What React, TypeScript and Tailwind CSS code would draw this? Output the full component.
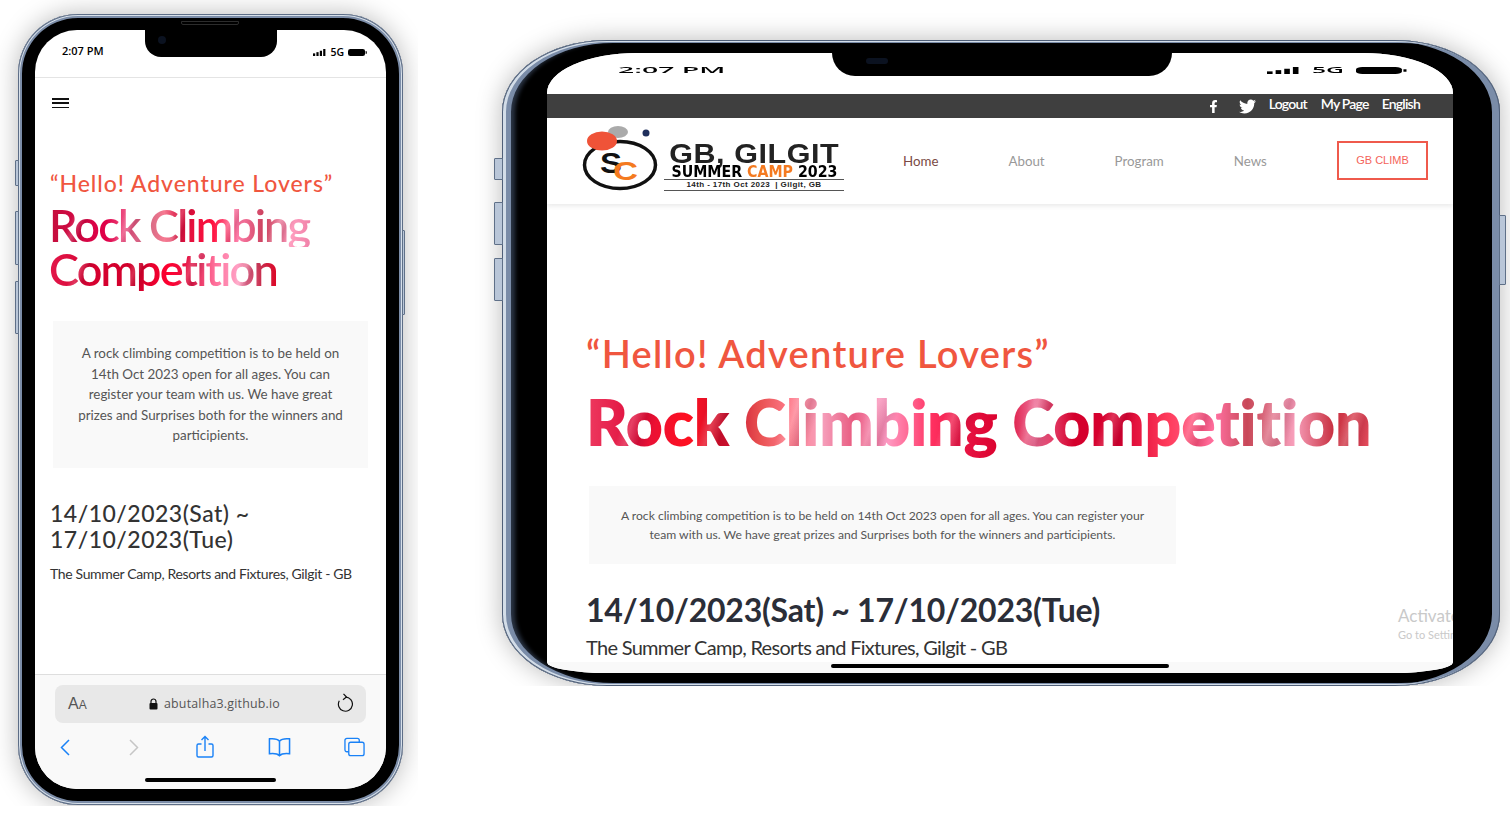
import { FaFacebookF, FaTwitter } from "react-icons/fa";

function Signal({ className }: { className: string }) {
  return (
    <svg viewBox="0 0 13 8" className={className} preserveAspectRatio="none">
      <rect x="0" y="5" width="2.2" height="3" fill="#000" />
      <rect x="3.4" y="3.6" width="2.2" height="4.4" fill="#000" />
      <rect x="6.8" y="2" width="2.2" height="6" fill="#000" />
      <rect x="10.2" y="0" width="2.2" height="8" fill="#000" />
    </svg>
  );
}

function Battery({ className }: { className: string }) {
  return (
    <svg viewBox="0 0 20 8" className={className} preserveAspectRatio="none">
      <rect x="0" y="0" width="18" height="8" rx="2.5" fill="#000" />
      <rect x="18.6" y="2.6" width="1.2" height="2.8" fill="#000" />
    </svg>
  );
}

function SideButton({ className }: { className: string }) {
  return <div className={`absolute rounded-[1px] border border-[#5f7088] bg-[#b9c6d8] ${className}`} />;
}

function Logo() {
  return (
    <div className="flex h-[68px] w-[262px] items-start">
      <svg viewBox="0 0 78 66" className="mt-[-2px] h-[66px] w-[78px] shrink-0">
        <ellipse cx="38" cy="40" rx="35.500" ry="23.500" fill="none" stroke="#111" strokeWidth="3.500" />
        <ellipse cx="36" cy="7" rx="10" ry="6" fill="#aaaaaa" />
        <circle cx="64" cy="8" r="3.500" fill="#1f2f5c" />
        <ellipse cx="20" cy="16" rx="15" ry="9.500" fill="#ef5338" />
        <text x="18" y="48" fontSize="29" fontWeight="700" fill="#111" fontFamily="Liberation Sans, sans-serif" textLength="22" lengthAdjust="spacingAndGlyphs">S</text>
        <text x="31" y="55" fontSize="25" fontWeight="700" fill="#f47a20" fontFamily="Liberation Sans, sans-serif" textLength="25" lengthAdjust="spacingAndGlyphs">C</text>
      </svg>
      <div className="mt-[16px] ml-[4px] flex w-[180px] flex-col items-center text-black">
        <div className="h-[22px] scale-x-[1.130] text-[27px] leading-[22px] font-bold tracking-[0.5px] text-[#222] [font-family:'Liberation_Sans',sans-serif]">
          GB, GILGIT
        </div>
        <div className="h-[14px] scale-x-[0.86] text-[16.500px] leading-[14px] font-bold whitespace-nowrap [font-family:'DejaVu_Sans',sans-serif]">
          SUMMER <span className="text-[#f47a20]">CAMP</span> 2023
        </div>
        <div className="h-[12px] w-[180px] border-y border-[#555] text-center text-[8px] leading-[10px] font-bold tracking-[0.4px] whitespace-nowrap text-[#222] [font-family:'Liberation_Sans',sans-serif]">
          14th - 17th Oct 2023 &nbsp;| Gilgit, GB
        </div>
      </div>
    </div>
  );
}

function MobilePhone() {
  return (
    <div className="absolute top-0 left-0 h-[806px] w-[418px] overflow-hidden pt-[14px] pl-[18px]">
      <div className="relative h-[791px] w-[385px] rounded-[60px] bg-black pt-[16px] pl-[17px] shadow-[inset_0_0_0_1px_#5d6d86,inset_0_0_0_2px_#d7e0ea,inset_0_0_0_4px_#7c8da8,0_0_26px_rgba(0,0,0,0.28)]">
        <SideButton className="top-[146px] left-[-3px] h-[26px] w-[4px]" />
        <SideButton className="top-[197px] left-[-3px] h-[54px] w-[4px]" />
        <SideButton className="top-[267px] left-[-3px] h-[53px] w-[4px]" />
        <SideButton className="top-[216px] right-[-2px] h-[85px] w-[3px]" />
        <div className="absolute top-[7px] left-[163px] h-[4px] w-[58px] rounded-b-[2px] border border-[#2c2c2c]" />
        <div className="relative flex h-[759px] w-[351px] flex-col overflow-hidden rounded-[42px] bg-white [font-family:Lato,sans-serif]">
          <div className="absolute top-0 left-[110px] flex h-[27px] w-[132px] items-start rounded-b-[16px] bg-black pt-[6px] pl-[13px]">
            <div className="h-[8px] w-[8px] rounded-full bg-[#0b1220]" />
          </div>
          <div className="flex h-[48px] shrink-0 items-start justify-between border-b border-[#e4e4e4] pt-[14px] pr-[19px] pl-[27px]">
            <span className="text-[11px] leading-[14px] font-semibold text-black [font-family:'Open_Sans',sans-serif]">2:07 PM</span>
            <div className="flex items-center gap-[4px] pt-[1px]">
              <Signal className="h-[7px] w-[13px]" />
              <span className="text-[10.500px] leading-[14px] font-semibold text-black [font-family:'Open_Sans',sans-serif]">5G</span>
              <Battery className="h-[7px] w-[19px]" />
            </div>
          </div>

          <div className="flex min-h-0 flex-1 flex-col pr-[18px] pl-[15px]">
            <div className="mt-[20px] ml-[2px] flex h-[10px] w-[17px] flex-col justify-between">
              <div className="h-[1.500px] bg-[#111]" />
              <div className="h-[1.500px] bg-[#111]" />
              <div className="h-[1.500px] bg-[#111]" />
            </div>
            <div className="mt-[61px] text-[23px] leading-[28px] font-medium tracking-[0.94px] whitespace-nowrap text-[#f0563f]">
              “Hello! Adventure Lovers”
            </div>
            <h1 className="mt-[6px] ml-[-1px] text-[45px] leading-[44px] font-semibold tracking-[-1.800px]">
              <span className="block w-fit bg-[repeating-linear-gradient(112deg,rgba(255,255,255,0)_0px,rgba(255,255,255,0)_26px,rgba(255,255,255,0.2)_33px,rgba(110,0,30,0.18)_40px,rgba(255,255,255,0)_47px),linear-gradient(90deg,#c40f3d_0%,#e00049_22%,#ef5d8c_30%,#c9637e_36%,#f67a92_44%,#d8113f_50%,#ff0f3c_62%,#ff7eaa_72%,#cb3f5c_82%,#ff9fc0_92%,#f080a8_100%)] bg-clip-text pr-[2px] text-transparent">
                Rock Climbing
              </span>
              <span className="block w-fit bg-[repeating-linear-gradient(112deg,rgba(255,255,255,0)_0px,rgba(255,255,255,0)_30px,rgba(255,255,255,0.18)_37px,rgba(110,0,30,0.2)_44px,rgba(255,255,255,0)_51px),linear-gradient(90deg,#e2184b_0%,#d6002f_20%,#d1002b_38%,#ff0030_52%,#e01a4a_62%,#ff6f9a_72%,#ffa0c4_82%,#c83050_92%,#e00020_100%)] bg-clip-text pr-[2px] text-transparent">
                Competition
              </span>
            </h1>
            <div className="mt-[30px] ml-[3px] flex h-[147px] w-[315px] shrink-0 items-center justify-center bg-[#f9f9f9] px-[20px] text-center text-[13.400px] leading-[20.600px] text-[#555]">
              <p>A rock climbing competition is to be held on 14th Oct 2023 open for all ages. You can register your team with us. We have great prizes and Surprises both for the winners and participients.</p>
            </div>
            <div className="mt-[32px] text-[23px] leading-[26px] font-medium tracking-[0.5px] text-[#333]">
              14/10/2023(Sat) ~<br />17/10/2023(Tue)
            </div>
            <p className="mt-[13px] text-[14px] leading-[18px] tracking-[-0.350px] whitespace-nowrap text-[#333]">
              The Summer Camp, Resorts and Fixtures, Gilgit - GB
            </p>
          </div>

          <div className="flex h-[115px] shrink-0 flex-col items-center border-t border-[#dedede] bg-[#f9f9f9]">
            <div className="mt-[10px] flex h-[38px] w-[311px] items-center rounded-[8px] bg-[#e8e8e8] pr-[13px] pl-[13px]">
              <span className="w-[81px] text-[#555] [font-family:'Liberation_Sans',sans-serif]">
                <span className="text-[16px]">A</span><span className="text-[12px]">A</span>
              </span>
              <svg viewBox="0 0 9 12" className="h-[12px] w-[9px] shrink-0">
                <path d="M2 5.500V3.500a2.500 2.500 0 0 1 5 0v2" fill="none" stroke="#111" strokeWidth="1.200" />
                <rect x="0.500" y="5" width="8" height="6.500" rx="1" fill="#111" />
              </svg>
              <span className="ml-[6px] flex-1 text-[12.400px] tracking-[0.2px] text-[#555] [font-family:'Open_Sans',sans-serif]">abutalha3.github.io</span>
              <svg viewBox="0 0 16 19" className="mb-[3px] h-[19px] w-[16px] shrink-0" fill="none" stroke="#111" strokeWidth="1.200">
                <path d="M8.500 4.200A7 7 0 1 1 2.300 7.800" />
                <path d="M6.500 0.800 9.500 4 6 6.800" />
              </svg>
            </div>
            <div className="mt-[12px] flex h-[24px] w-full items-center pl-[25px]">
              <svg viewBox="0 0 10 17" className="h-[17px] w-[10px] shrink-0" fill="none" stroke="#1a82f7" strokeWidth="1.500">
                <path d="M9 1 1.500 8.500 9 16" />
              </svg>
              <svg viewBox="0 0 10 17" className="ml-[59px] h-[17px] w-[10px] shrink-0" fill="none" stroke="#c6c6c6" strokeWidth="1.500">
                <path d="M1 1 8.500 8.500 1 16" />
              </svg>
              <svg viewBox="0 0 18 24" className="ml-[57px] h-[24px] w-[18px] shrink-0" fill="none" stroke="#1a82f7" strokeWidth="1.400">
                <path d="M5.500 9H2.500a1.500 1.500 0 0 0-1.500 1.500v10a1.500 1.500 0 0 0 1.500 1.500h13a1.500 1.500 0 0 0 1.500-1.500v-10A1.500 1.500 0 0 0 15.500 9h-3" />
                <path d="M9 16V1.500M5.500 5 9 1.500 12.500 5" />
              </svg>
              <svg viewBox="0 0 24 20" className="ml-[54px] h-[20px] w-[23px] shrink-0" fill="none" stroke="#1a82f7" strokeWidth="1.600">
                <path d="M12 4C10 1.500 6 1 1.500 1.500V17C6 16.500 10 17 12 19c2-2 6-2.500 10.500-2V1.500C18 1 14 1.500 12 4Zm0 0v15" />
              </svg>
              <svg viewBox="0 0 22 20" className="ml-[53px] h-[20px] w-[21px] shrink-0" fill="none" stroke="#1a82f7" strokeWidth="1.400">
                <rect x="5" y="5" width="16" height="14" rx="2" />
                <path d="M5 15H3a2 2 0 0 1-2-2V3a2 2 0 0 1 2-2h11a2 2 0 0 1 2 2v2" />
              </svg>
            </div>
            <div className="mt-[19px] h-[4px] w-[131px] rounded-full bg-black" />
          </div>
        </div>
      </div>
    </div>
  );
}

function DesktopPhone() {
  return (
    <div className="absolute top-0 left-[420px] h-[686px] w-[1090px] overflow-hidden pt-[40px] pl-[82px]">
      <div className="relative h-[646px] w-[998px] rounded-[105px/72px] bg-black pt-[13px] pl-[45px] shadow-[inset_0_0_0_1px_#4f5f78,inset_2px_0_0_2px_#d3dde8,inset_6px_0_0_3px_#7a8ca8,inset_-7px_0_0_1px_#7a8ca8,inset_13px_0_4px_0_#2a3444,0_0_26px_rgba(0,0,0,0.28)]">
        <SideButton className="top-[118px] left-[-8px] h-[22px] w-[9px]" />
        <SideButton className="top-[162px] left-[-8px] h-[43px] w-[9px]" />
        <SideButton className="top-[218px] left-[-8px] h-[43px] w-[9px]" />
        <SideButton className="top-[175px] right-[-6px] h-[70px] w-[7px]" />
        <div className="relative flex h-[620px] w-[906px] flex-col overflow-hidden rounded-t-[90px_40px] rounded-b-[60px_11px] bg-[#f9f9f9] [font-family:Lato,sans-serif]">
          <div className="absolute top-0 left-[285px] flex h-[23px] w-[340px] items-start justify-start rounded-b-[24px] bg-black pt-[5px] pl-[34px]">
            <div className="h-[6px] w-[22px] rounded-full bg-[#0b1220]" />
          </div>
          <div className="flex h-[41px] shrink-0 items-start justify-between bg-white pt-[8px] pr-[46px] pl-[71px]">
            <span className="origin-left scale-x-[2.180] scale-y-[0.68] text-[13px] leading-[18px] font-semibold whitespace-nowrap text-black [font-family:'Open_Sans',sans-serif]">2:07 PM</span>
            <div className="flex items-center pt-[2px]">
              <Signal className="h-[7px] w-[33px]" />
              <span className="ml-[12px] w-[33px] origin-left scale-x-[1.900] scale-y-[0.68] text-[13px] leading-[14px] font-semibold text-black [font-family:'Open_Sans',sans-serif]">5G</span>
              <Battery className="ml-[11px] h-[7px] w-[51px]" />
            </div>
          </div>
          <div className="flex h-[24px] shrink-0 items-center justify-end bg-[#3f3f3f] pr-[33px] text-[14px] font-semibold tracking-[-0.800px] text-white">
            <FaFacebookF size={13} className="mr-[19px]" />
            <FaTwitter size={17} className="mr-[13px]" />
            <span className="mr-[14px] mb-[5px]">Logout</span>
            <span className="mr-[13px] mb-[5px]">My Page</span>
            <span className="mb-[5px]">English</span>
          </div>
          <div className="relative z-10 flex h-[86px] shrink-0 items-center bg-white pr-[25px] pl-[35px] text-[13.300px] shadow-[0_2px_5px_rgba(0,0,0,0.09)]">
            <Logo />
            <span className="mt-[2px] ml-[59px] text-[#7a4a44]">Home</span>
            <span className="mt-[2px] ml-[70px] text-[#999]">About</span>
            <span className="mt-[2px] ml-[70px] text-[#999]">Program</span>
            <span className="mt-[2px] ml-[70px] text-[#999]">News</span>
            <div className="mb-[2px] ml-auto flex h-[39px] w-[91px] items-center justify-center border-2 border-[#ef5a4c] text-[11px] text-[#f4635a] [font-family:'Liberation_Sans',sans-serif]">
              GB CLIMB
            </div>
          </div>
          <div className="relative min-h-0 flex-1 overflow-hidden bg-white pl-[39px]">
            <div className="mt-[125px] text-[38px] leading-[48px] font-semibold tracking-[1.300px] whitespace-nowrap text-[#f0563f]">
              “Hello! Adventure Lovers”
            </div>
            <h1 className="mt-[12px] w-fit bg-[repeating-linear-gradient(108deg,rgba(255,255,255,0)_0px,rgba(255,255,255,0)_44px,rgba(255,255,255,0.2)_54px,rgba(110,0,30,0.18)_66px,rgba(255,255,255,0)_76px),linear-gradient(90deg,#ee3a60_0%,#e0103e_6%,#ff1020_13%,#c8102e_18%,#e85050_22%,#ff7c8c_26%,#f6a0bc_30%,#e85b80_34%,#ffa0c8_38%,#ff3060_44%,#e5103f_49%,#d9002c_53%,#ee6f98_57%,#d4002c_62%,#d80030_68%,#ff3c5c_74%,#ff70a0_80%,#c84858_84%,#f8a0bc_90%,#c83040_95%,#e85060_100%)] bg-clip-text pr-[2px] pb-[8px] text-[64px] leading-[66px] font-extrabold tracking-[-0.150px] whitespace-nowrap text-transparent">
              Rock Climbing Competition
            </h1>
            <div className="mt-[23px] ml-[3px] flex h-[78px] w-[587px] items-center justify-center bg-[#f9f9f9] text-center text-[12.150px] leading-[19px] text-[#555]">
              <p>A rock climbing competition is to be held on 14th Oct 2023 open for all ages. You can register your<br />team with us. We have great prizes and Surprises both for the winners and participients.</p>
            </div>
            <div className="mt-[26px] text-[32px] leading-[40px] font-bold tracking-[-0.230px] whitespace-nowrap text-[#2b2e38]">
              14/10/2023(Sat) ~ 17/10/2023(Tue)
            </div>
            <p className="mt-[4px] text-[20px] leading-[26px] tracking-[-0.700px] whitespace-nowrap text-[#333]">
              The Summer Camp, Resorts and Fixtures, Gilgit - GB
            </p>
            <div className="absolute top-[400px] right-[-50px] w-[105px] text-[#c9c9c9]">
              <div className="text-[17px] leading-[24px]">Activate</div>
              <div className="text-[11px] leading-[14px]">Go to Settings</div>
            </div>
          </div>
          <div className="flex h-[11px] shrink-0 justify-center bg-[#f9f9f9] pt-[2px]">
            <div className="h-[4px] w-[338px] rounded-full bg-black" />
          </div>
        </div>
      </div>
    </div>
  );
}

export default function App() {
  return (
    <div className="relative h-[817px] w-[1510px] overflow-hidden bg-white">
      <MobilePhone />
      <DesktopPhone />
    </div>
  );
}
